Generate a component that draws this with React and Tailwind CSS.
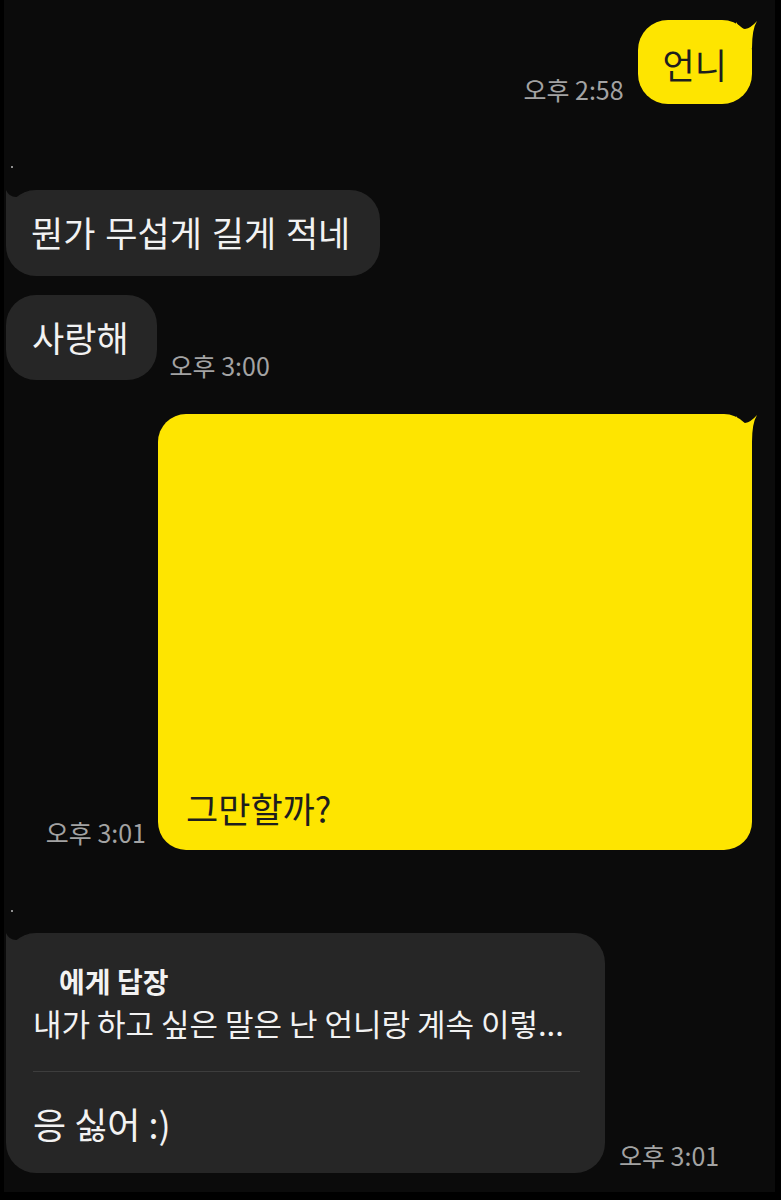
import React from "react";

const font = { fontFamily: '"Noto Sans CJK KR", "Noto Sans", sans-serif' };

function YellowTail() {
  return (
    <svg
      className="absolute top-0 right-[-6px]"
      width="22"
      height="28"
      viewBox="0 0 22 28"
    >
      <path d="M0,2 Q4,9 9,9 Q15,8 21,1 Q16,9 16,28 L0,28 Z" fill="#FEE500" />
    </svg>
  );
}

function GrayTail() {
  return (
    <svg
      className="absolute top-0 left-0"
      width="24"
      height="30"
      viewBox="0 0 24 30"
    >
      <path d="M0,0 Q3,7 10,7 Q17,7 24,0.6 L24,30 L0,30 Z" fill="#262626" />
    </svg>
  );
}

function Time({ children, className = "" }) {
  return (
    <div
      className={
        "shrink-0 text-[25px] leading-[30px] text-[#a3a3a3] whitespace-nowrap " +
        className
      }
    >
      {children}
    </div>
  );
}

export default function App() {
  return (
    <div className="w-[781px] h-[1200px] bg-black overflow-hidden" style={font}>
      <div className="ml-[4px] w-[771px] h-[1192px] bg-[#0b0b0b] flex flex-col overflow-hidden">
        {/* Row 1 */}
        <div className="mt-[20px] flex justify-end items-end gap-[14px] pr-[23px]">
          <Time>오후 2:58</Time>
          <div className="relative bg-[#FEE500] rounded-[30px] pl-[25px] pr-[25px] pt-[22px] pb-[18px] text-[35px] leading-[44px] text-[#1e1e1e]">
            언니
            <YellowTail />
          </div>
        </div>

        {/* dot */}
        <div className="mt-[62px] ml-[7px] w-[2px] h-[2px] rounded-full bg-[#bdbdbd]" />

        {/* Bubble 2 */}
        <div className="mt-[22px] ml-[2px] flex">
          <div className="relative bg-[#262626] rounded-[30px] pl-[25px] pr-[30px] pt-[20px] pb-[22px] text-[35px] leading-[44px] text-[#f2f2f2] [word-spacing:2px]">
            <GrayTail />
            <span className="relative">뭔가 무섭게 길게 적네</span>
          </div>
        </div>

        {/* Bubble 3 */}
        <div className="mt-[19px] ml-[2px] flex items-end gap-[13px]">
          <div className="bg-[#262626] rounded-[30px] pl-[26px] pr-[28px] pt-[20px] pb-[21px] text-[35px] leading-[44px] text-[#f2f2f2]">
            사랑해
          </div>
          <Time>오후 3:00</Time>
        </div>

        {/* Big yellow */}
        <div className="mt-[34px] flex justify-end items-end gap-[12px] pr-[23px]">
          <Time className="mb-[3px]">오후 3:01</Time>
          <div className="relative w-[594px] h-[436px] bg-[#FEE500] rounded-[28px] flex flex-col justify-end pl-[28px] pb-[20px] text-[35px] leading-[44px] text-[#1e1e1e]">
            그만할까?
            <YellowTail />
          </div>
        </div>

        {/* dot */}
        <div className="mt-[60px] ml-[7px] w-[2px] h-[2px] rounded-full bg-[#bdbdbd]" />

        {/* Reply bubble */}
        <div className="mt-[21px] ml-[2px] flex items-end gap-[14px]">
          <div className="relative w-[599px] bg-[#262626] rounded-[30px] pl-[27px] pr-[25px] pt-[30px] pb-[28px] text-[#f2f2f2]">
            <GrayTail />
            <div className="relative ml-[26px] text-[28px] leading-[36px] font-bold">
              에게 답장
            </div>
            <div className="relative mt-[5px] text-[31px] leading-[38px] whitespace-nowrap">
              내가 하고 싶은 말은 난 언니랑 계속 이렇...
            </div>
            <div className="mt-[29px] h-px bg-[#3d3d3d]" />
            <div className="mt-[29px] text-[36px] leading-[44px]">응 싫어 :)</div>
          </div>
          <Time className="mb-[3px]">오후 3:01</Time>
        </div>
      </div>
    </div>
  );
}
